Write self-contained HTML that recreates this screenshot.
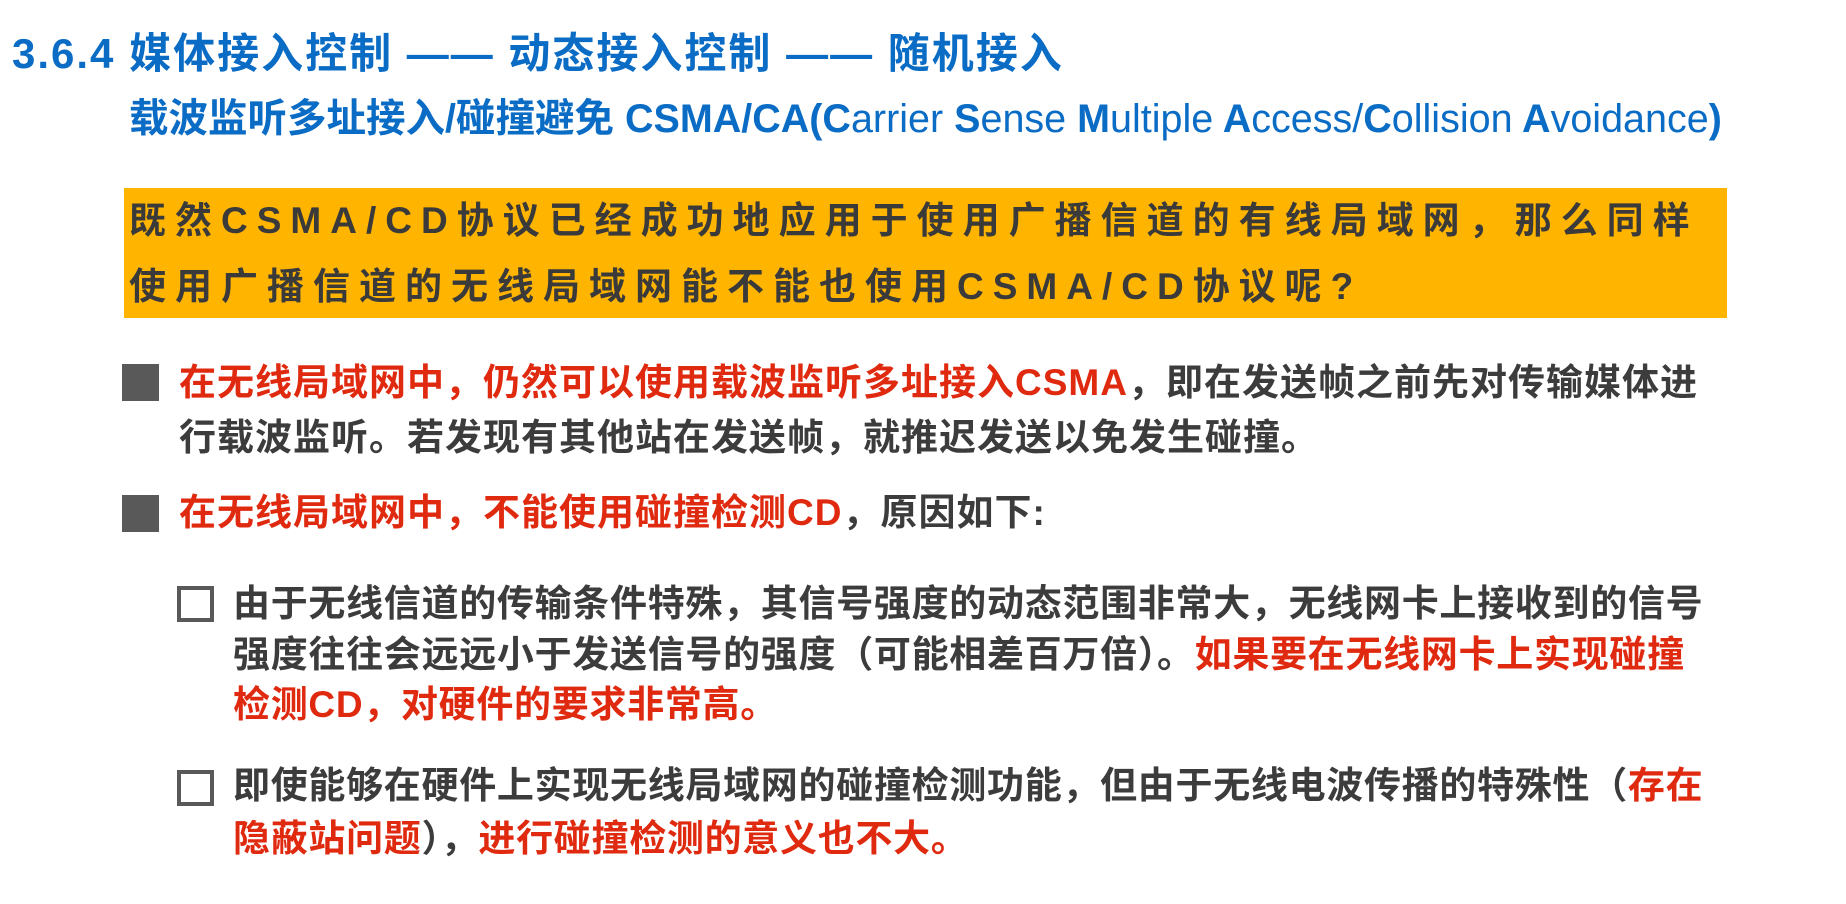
<!DOCTYPE html>
<html><head><meta charset="utf-8"><style>
body{margin:0;width:1846px;height:904px;background:#fff;overflow:hidden;position:relative;font-family:"Liberation Sans","Noto Sans CJK SC",sans-serif;font-weight:bold}
.l{position:absolute;white-space:nowrap;line-height:1}
.b{color:#0a6cc4}
.r{color:#e02a10}
.g{color:#3c3c3c}
.n{font-weight:normal}
.sq{position:absolute;background:#595959}
.hq{position:absolute;border:4px solid #595959;box-sizing:border-box}
</style></head><body>
<div class="l b" style="left:12px;top:33px;font-size:42px;letter-spacing:2px">3.6.4 媒体接入控制 —— 动态接入控制 —— 随机接入</div>
<div class="l b" style="left:129px;top:100px;font-size:39.5px">载波监听多址接入/碰撞避免 CSMA/CA(C<span class="n">arrier</span> S<span class="n">ense</span> M<span class="n">ultiple</span> A<span class="n">ccess/</span>C<span class="n">ollision</span> A<span class="n">voidance</span>)</div>
<div style="position:absolute;left:124px;top:188px;width:1603px;height:130px;background:#ffb400"></div>
<div class="l" style="left:129px;top:202px;font-size:37px;letter-spacing:9px;color:#3a3a3a">既然CSMA/CD协议已经成功地应用于使用广播信道的有线局域网，那么同样</div>
<div class="l" style="left:129px;top:268px;font-size:37px;letter-spacing:9px;color:#3a3a3a">使用广播信道的无线局域网能不能也使用CSMA/CD协议呢?</div>
<div class="sq" style="left:122px;top:364px;width:37px;height:37px"></div>
<div class="l g" style="left:179px;top:364px;font-size:37px;letter-spacing:1px"><span class="r">在无线局域网中，仍然可以使用载波监听多址接入CSMA</span>，即在发送帧之前先对传输媒体进</div>
<div class="l g" style="left:179px;top:419px;font-size:37px;letter-spacing:1px">行载波监听。若发现有其他站在发送帧，就推迟发送以免发生碰撞。</div>
<div class="sq" style="left:122px;top:495px;width:37px;height:37px"></div>
<div class="l g" style="left:179px;top:494px;font-size:37px;letter-spacing:1px"><span class="r">在无线局域网中，不能使用碰撞检测CD</span>，原因如下:</div>
<div class="hq" style="left:177px;top:586px;width:37px;height:36px"></div>
<div class="l g" style="left:233px;top:585px;font-size:37px;letter-spacing:0.7px">由于无线信道的传输条件特殊，其信号强度的动态范围非常大，无线网卡上接收到的信号</div>
<div class="l g" style="left:233px;top:636px;font-size:37px;letter-spacing:0.7px">强度往往会远远小于发送信号的强度（可能相差百万倍）。<span class="r">如果要在无线网卡上实现碰撞</span></div>
<div class="l r" style="left:233px;top:686px;font-size:37px;letter-spacing:0.7px">检测CD，对硬件的要求非常高。</div>
<div class="hq" style="left:177px;top:770px;width:37px;height:36px"></div>
<div class="l g" style="left:233px;top:767px;font-size:37px;letter-spacing:0.7px">即使能够在硬件上实现无线局域网的碰撞检测功能，但由于无线电波传播的特殊性（<span class="r">存在</span></div>
<div class="l g" style="left:233px;top:820px;font-size:37px;letter-spacing:0.7px"><span class="r">隐蔽站问题</span>），<span class="r">进行碰撞检测的意义也不大。</span></div>
</body></html>
